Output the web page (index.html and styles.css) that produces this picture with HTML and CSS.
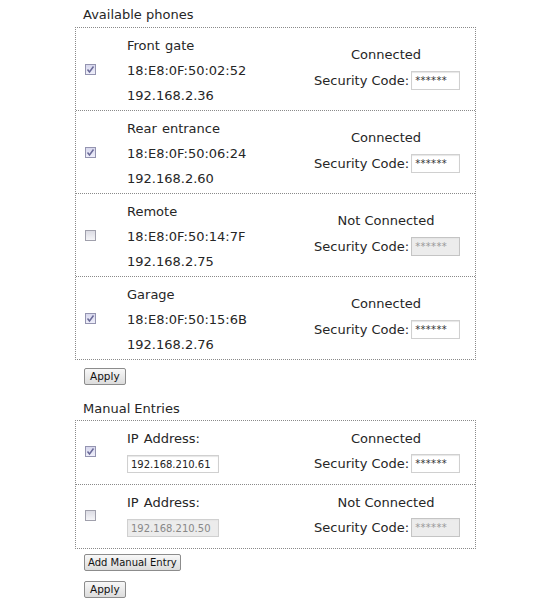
FILE: index.html
```html
<!DOCTYPE html>
<html>
<head>
<meta charset="utf-8">
<link rel="stylesheet" href="styles.css">
</head>
<body>
<div class="page">
  <div class="title">Available phones</div>
  <div class="box">
    <div class="row">
      <div class="chk-cell"><span class="chk on"><svg viewBox="0 0 11 11" width="11" height="11"><path d="M2.5 5.5 L4.5 8 L8.5 2.5" fill="none" stroke="#6a6a98" stroke-width="1.5"/></svg></span></div>
      <div class="info">
        <div class="line">Front gate</div>
        <div class="line">18:E8:0F:50:02:52</div>
        <div class="line">192.168.2.36</div>
      </div>
      <div class="status">
        <div class="sline">Connected</div>
        <div class="sline">Security Code:<span class="code">******</span></div>
      </div>
    </div>
    <div class="row">
      <div class="chk-cell"><span class="chk on"><svg viewBox="0 0 11 11" width="11" height="11"><path d="M2.5 5.5 L4.5 8 L8.5 2.5" fill="none" stroke="#6a6a98" stroke-width="1.5"/></svg></span></div>
      <div class="info">
        <div class="line">Rear entrance</div>
        <div class="line">18:E8:0F:50:06:24</div>
        <div class="line">192.168.2.60</div>
      </div>
      <div class="status">
        <div class="sline">Connected</div>
        <div class="sline">Security Code:<span class="code">******</span></div>
      </div>
    </div>
    <div class="row">
      <div class="chk-cell"><span class="chk"></span></div>
      <div class="info">
        <div class="line">Remote</div>
        <div class="line">18:E8:0F:50:14:7F</div>
        <div class="line">192.168.2.75</div>
      </div>
      <div class="status">
        <div class="sline">Not Connected</div>
        <div class="sline">Security Code:<span class="code off">******</span></div>
      </div>
    </div>
    <div class="row">
      <div class="chk-cell"><span class="chk on"><svg viewBox="0 0 11 11" width="11" height="11"><path d="M2.5 5.5 L4.5 8 L8.5 2.5" fill="none" stroke="#6a6a98" stroke-width="1.5"/></svg></span></div>
      <div class="info">
        <div class="line">Garage</div>
        <div class="line">18:E8:0F:50:15:6B</div>
        <div class="line">192.168.2.76</div>
      </div>
      <div class="status">
        <div class="sline">Connected</div>
        <div class="sline">Security Code:<span class="code">******</span></div>
      </div>
    </div>
  </div>
  <div class="btn-row first"><span class="btn">Apply</span></div>

  <div class="title second">Manual Entries</div>
  <div class="box">
    <div class="row manual">
      <div class="chk-cell"><span class="chk on"><svg viewBox="0 0 11 11" width="11" height="11"><path d="M2.5 5.5 L4.5 8 L8.5 2.5" fill="none" stroke="#6a6a98" stroke-width="1.5"/></svg></span></div>
      <div class="info">
        <div class="line">IP Address:</div>
        <span class="ip">192.168.210.61</span>
      </div>
      <div class="status top">
        <div class="sline">Connected</div>
        <div class="sline">Security Code:<span class="code">******</span></div>
      </div>
    </div>
    <div class="row manual">
      <div class="chk-cell"><span class="chk"></span></div>
      <div class="info">
        <div class="line">IP Address:</div>
        <span class="ip off">192.168.210.50</span>
      </div>
      <div class="status top">
        <div class="sline">Not Connected</div>
        <div class="sline">Security Code:<span class="code off">******</span></div>
      </div>
    </div>
  </div>
  <div class="btn-row add"><span class="btn wide">Add Manual Entry</span></div>
  <div class="btn-row last"><span class="btn">Apply</span></div>
</div>
</body>
</html>
```
FILE: styles.css
```css
html, body {
  margin: 0;
  padding: 0;
  background: #ffffff;
}
body {
  font-family: "DejaVu Sans", Verdana, sans-serif;
  font-size: 13px;
  color: #262626;
}
.page {
  padding: 5px 0 0 75px;
  width: 401px;
}
.title {
  height: 20px;
  line-height: 20px;
  padding-left: 8px;
  margin-bottom: 2px;
  font-size: 13px;
}
.title.second {
  margin-top: 14px;
  margin-bottom: 1px;
}
.box {
  border: 1px dotted #8a8a8a;
  width: 399px;
}
.row {
  display: flex;
  align-items: center;
  height: 83px;
  border-top: 1px dotted #8a8a8a;
  box-sizing: border-box;
}
.row:first-child {
  border-top: none;
  height: 82px;
}
.chk-cell {
  width: 51px;
  display: flex;
  align-items: center;
}
.chk {
  display: block;
  width: 11px;
  height: 11px;
  margin-left: 9px;
  border: 1px solid #a0a0ac;
  background: linear-gradient(#dcdce4, #f5f5f8);
  box-sizing: border-box;
  position: relative;
}
.chk svg {
  position: absolute;
  left: -1px;
  top: -1px;
}
.chk.on {
  border-color: #9494b0;
  background: linear-gradient(#d8d8ee, #efeffa);
}
.info {
  flex: 1;
  align-self: flex-start;
  padding-top: 5px;
}
.line {
  height: 25px;
  line-height: 25px;
  white-space: nowrap;
  word-spacing: 1px;
}
.status {
  width: 144px;
  margin-right: 17px;
  text-align: center;
  margin-top: -2px;
}
.status.top {
  align-self: flex-start;
  margin-top: 5px;
}
.sline {
  height: 26px;
  line-height: 26px;
  white-space: nowrap;
}
.status.top .sline {
  height: 25px;
  line-height: 25px;
}
.code {
  display: inline-block;
  vertical-align: middle;
  width: 49px;
  height: 19px;
  line-height: 18px;
  margin-left: 2px;
  border: 1px solid #d0d0d0;
  box-shadow: inset 0 1px 1px #e6e6e6;
  box-sizing: border-box;
  font-size: 10px;
  color: #333;
  text-align: left;
  padding-left: 3px;
  letter-spacing: 0.3px;
  margin-top: -3px;
}
.code.off {
  background: #ececec;
  color: #999;
  border-color: #c4c4c4;
}
.row.manual {
  height: 64px;
}
.row.manual:first-child {
  height: 63px;
}
.row.manual .chk-cell {
  margin-top: -3px;
}
.ip {
  display: block;
  width: 92px;
  height: 18px;
  line-height: 17px;
  margin-top: 4px;
  border: 1px solid #d0d0d0;
  box-shadow: inset 0 1px 1px #e6e6e6;
  box-sizing: border-box;
  font-size: 10px;
  padding-left: 3px;
  color: #222;
}
.ip.off {
  background: #ececec;
  color: #888;
}
.btn-row {
  padding-left: 9px;
  display: flex;
}
.btn-row.first {
  margin-top: 8px;
}
.btn-row.add {
  margin-top: 5px;
}
.btn-row.last {
  margin-top: 10px;
}
.btn {
  display: block;
  height: 17px;
  line-height: 15px;
  padding: 0 5px;
  border: 1px solid #8c8c8c;
  border-radius: 2px;
  box-sizing: border-box;
  background: linear-gradient(#f8f8f8, #dcdcdc);
  font-size: 10.5px;
  color: #111;
  white-space: nowrap;
}
.btn.wide {
  padding: 0 3px;
  font-size: 10px;
}
```
